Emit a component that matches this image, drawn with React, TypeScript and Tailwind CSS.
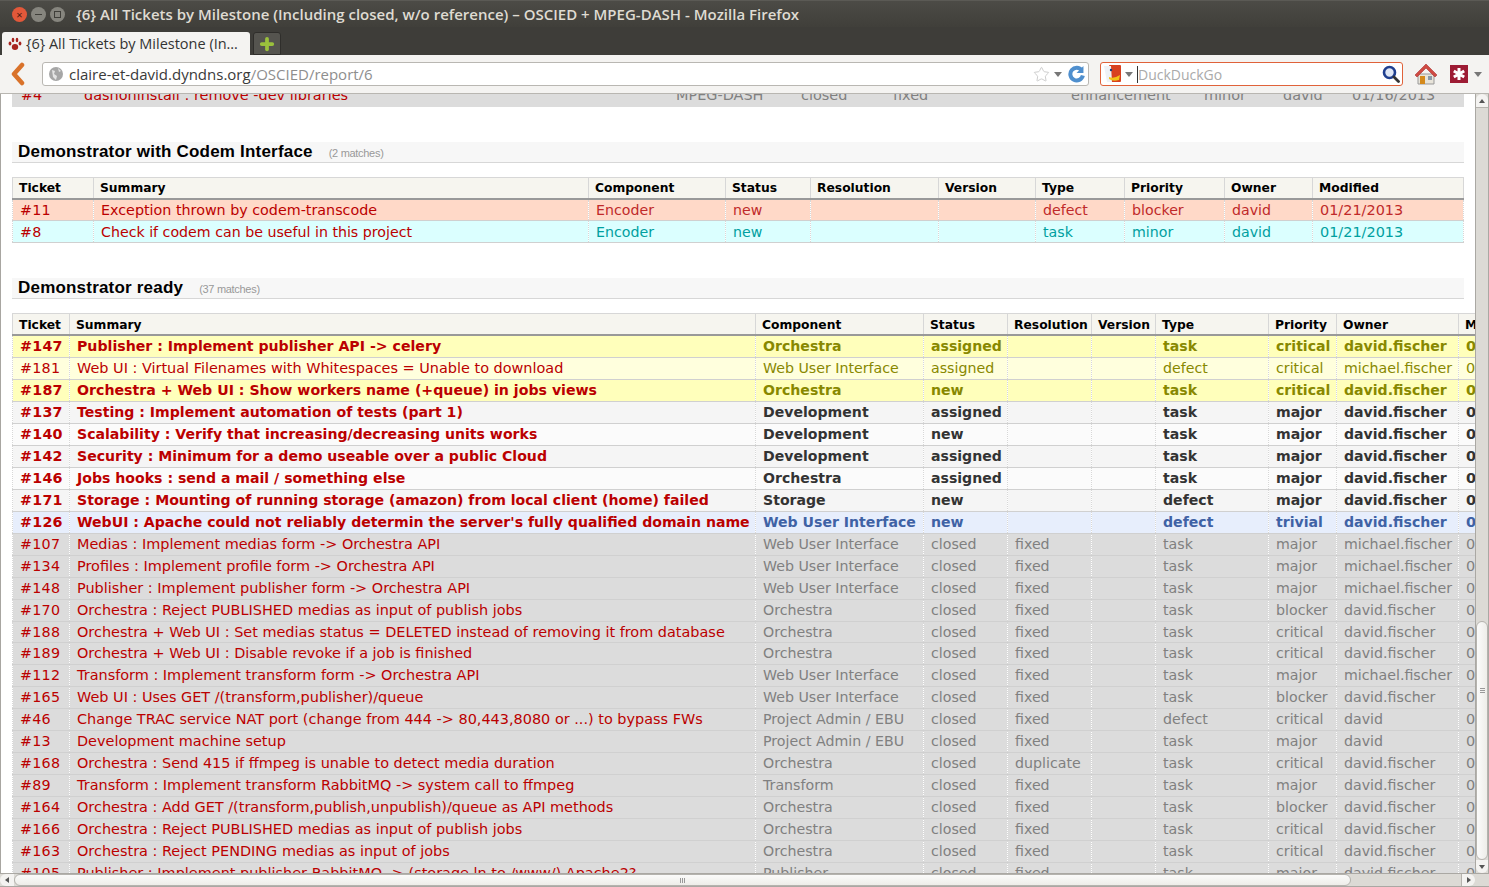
import { Plus, Star } from 'lucide-react';

const TABLE_FONT = "font-['DejaVu_Sans',sans-serif]";

type Row = {
  id: string;
  summary: string;
  component: string;
  status: string;
  resolution?: string;
  type: string;
  priority: string;
  owner: string;
  tone: keyof typeof tones;
  date?: string;
};

const tones = {
  yellowBold: { bg: 'bg-[#ffffbb]', text: 'text-[#888800]', bold: true, summary: 'text-[14.15px]' },
  yellow: { bg: 'bg-[#ffffdd]', text: 'text-[#888800]', bold: false, summary: 'text-[14.45px]' },
  whiteBold: { bg: 'bg-[#f5f5f5]', text: 'text-[#333333]', bold: true, summary: 'text-[14.1px]' },
  whiteAlt: { bg: 'bg-[#fbfbfb]', text: 'text-[#333333]', bold: true, summary: 'text-[14.1px]' },
  blueBold: { bg: 'bg-[#e7eefc]', text: 'text-[#3f62a5]', bold: true, summary: 'text-[14.1px]' },
  closed: { bg: 'bg-[#dcdcdc]', text: 'text-[#808080]', bold: false, summary: 'text-[14.45px]' },
  red: { bg: 'bg-[#ffd9c8]', text: 'text-[#c02a2a]', bold: false, summary: 'text-[14.3px]' },
  cyan: { bg: 'bg-[#dbffff]', text: 'text-[#00a0a0]', bold: false, summary: 'text-[14.2px]' }
};

const codemRows: Row[] = [
  { id: '#11', summary: 'Exception thrown by codem-transcode', component: 'Encoder', status: 'new', type: 'defect', priority: 'blocker', owner: 'david', tone: 'red', date: '01/21/2013' },
  { id: '#8', summary: 'Check if codem can be useful in this project', component: 'Encoder', status: 'new', type: 'task', priority: 'minor', owner: 'david', tone: 'cyan', date: '01/21/2013' }
];

const readyRows: Row[] = [
  { id: '#147', summary: 'Publisher : Implement publisher API -> celery', component: 'Orchestra', status: 'assigned', type: 'task', priority: 'critical', owner: 'david.fischer', tone: 'yellowBold' },
  { id: '#181', summary: 'Web UI : Virtual Filenames with Whitespaces = Unable to download', component: 'Web User Interface', status: 'assigned', type: 'defect', priority: 'critical', owner: 'michael.fischer', tone: 'yellow' },
  { id: '#187', summary: 'Orchestra + Web UI : Show workers name (+queue) in jobs views', component: 'Orchestra', status: 'new', type: 'task', priority: 'critical', owner: 'david.fischer', tone: 'yellowBold' },
  { id: '#137', summary: 'Testing : Implement automation of tests (part 1)', component: 'Development', status: 'assigned', type: 'task', priority: 'major', owner: 'david.fischer', tone: 'whiteBold' },
  { id: '#140', summary: 'Scalability : Verify that increasing/decreasing units works', component: 'Development', status: 'new', type: 'task', priority: 'major', owner: 'david.fischer', tone: 'whiteAlt' },
  { id: '#142', summary: 'Security : Minimum for a demo useable over a public Cloud', component: 'Development', status: 'assigned', type: 'task', priority: 'major', owner: 'david.fischer', tone: 'whiteBold' },
  { id: '#146', summary: 'Jobs hooks : send a mail / something else', component: 'Orchestra', status: 'assigned', type: 'task', priority: 'major', owner: 'david.fischer', tone: 'whiteAlt' },
  { id: '#171', summary: 'Storage : Mounting of running storage (amazon) from local client (home) failed', component: 'Storage', status: 'new', type: 'defect', priority: 'major', owner: 'david.fischer', tone: 'whiteBold' },
  { id: '#126', summary: "WebUI : Apache could not reliably determin the server's fully qualified domain name", component: 'Web User Interface', status: 'new', type: 'defect', priority: 'trivial', owner: 'david.fischer', tone: 'blueBold' },
  { id: '#107', summary: 'Medias : Implement medias form -> Orchestra API', component: 'Web User Interface', status: 'closed', resolution: 'fixed', type: 'task', priority: 'major', owner: 'michael.fischer', tone: 'closed' },
  { id: '#134', summary: 'Profiles : Implement profile form -> Orchestra API', component: 'Web User Interface', status: 'closed', resolution: 'fixed', type: 'task', priority: 'major', owner: 'michael.fischer', tone: 'closed' },
  { id: '#148', summary: 'Publisher : Implement publisher form -> Orchestra API', component: 'Web User Interface', status: 'closed', resolution: 'fixed', type: 'task', priority: 'major', owner: 'michael.fischer', tone: 'closed' },
  { id: '#170', summary: 'Orchestra : Reject PUBLISHED medias as input of publish jobs', component: 'Orchestra', status: 'closed', resolution: 'fixed', type: 'task', priority: 'blocker', owner: 'david.fischer', tone: 'closed' },
  { id: '#188', summary: 'Orchestra + Web UI : Set medias status = DELETED instead of removing it from database', component: 'Orchestra', status: 'closed', resolution: 'fixed', type: 'task', priority: 'critical', owner: 'david.fischer', tone: 'closed' },
  { id: '#189', summary: 'Orchestra + Web UI : Disable revoke if a job is finished', component: 'Orchestra', status: 'closed', resolution: 'fixed', type: 'task', priority: 'critical', owner: 'david.fischer', tone: 'closed' },
  { id: '#112', summary: 'Transform : Implement transform form -> Orchestra API', component: 'Web User Interface', status: 'closed', resolution: 'fixed', type: 'task', priority: 'major', owner: 'michael.fischer', tone: 'closed' },
  { id: '#165', summary: 'Web UI : Uses GET /(transform,publisher)/queue', component: 'Web User Interface', status: 'closed', resolution: 'fixed', type: 'task', priority: 'blocker', owner: 'david.fischer', tone: 'closed' },
  { id: '#46', summary: 'Change TRAC service NAT port (change from 444 -> 80,443,8080 or ...) to bypass FWs', component: 'Project Admin / EBU', status: 'closed', resolution: 'fixed', type: 'defect', priority: 'critical', owner: 'david', tone: 'closed' },
  { id: '#13', summary: 'Development machine setup', component: 'Project Admin / EBU', status: 'closed', resolution: 'fixed', type: 'task', priority: 'major', owner: 'david', tone: 'closed' },
  { id: '#168', summary: 'Orchestra : Send 415 if ffmpeg is unable to detect media duration', component: 'Orchestra', status: 'closed', resolution: 'duplicate', type: 'task', priority: 'critical', owner: 'david.fischer', tone: 'closed' },
  { id: '#89', summary: 'Transform : Implement transform RabbitMQ -> system call to ffmpeg', component: 'Transform', status: 'closed', resolution: 'fixed', type: 'task', priority: 'major', owner: 'david.fischer', tone: 'closed' },
  { id: '#164', summary: 'Orchestra : Add GET /(transform,publish,unpublish)/queue as API methods', component: 'Orchestra', status: 'closed', resolution: 'fixed', type: 'task', priority: 'blocker', owner: 'david.fischer', tone: 'closed' },
  { id: '#166', summary: 'Orchestra : Reject PUBLISHED medias as input of publish jobs', component: 'Orchestra', status: 'closed', resolution: 'fixed', type: 'task', priority: 'critical', owner: 'david.fischer', tone: 'closed' },
  { id: '#163', summary: 'Orchestra : Reject PENDING medias as input of jobs', component: 'Orchestra', status: 'closed', resolution: 'fixed', type: 'task', priority: 'critical', owner: 'david.fischer', tone: 'closed' },
  { id: '#105', summary: 'Publisher : Implement publisher RabbitMQ -> (storage ln to /www/) Apache2?', component: 'Publisher', status: 'closed', resolution: 'fixed', type: 'task', priority: 'major', owner: 'david.fischer', tone: 'closed' }
];

const codemCols = [81, 495, 137, 85, 128, 97, 89, 100, 88, 151];
const readyCols = [57, 686, 168, 84, 84, 64, 113, 68, 122, 60];
const headers = ['Ticket', 'Summary', 'Component', 'Status', 'Resolution', 'Version', 'Type', 'Priority', 'Owner', 'Modified'];

function Browser() {
  return (
    <div className="shrink-0 font-['Open_Sans',sans-serif]">
      <div className="flex h-[27px] items-center gap-[4px] border-t border-[#5b5a55] bg-gradient-to-b from-[#4c4b46] to-[#403f3a] pl-[12px]">
        <span className="flex h-[15px] w-[15px] items-center justify-center rounded-full bg-[#e2583a] text-[11px] leading-none text-[#4a1a10]">×</span>
        <span className="flex h-[15px] w-[15px] items-center justify-center rounded-full bg-[#86857e]">
          <span className="h-px w-[7px] bg-[#3f3e39]" />
        </span>
        <span className="flex h-[15px] w-[15px] items-center justify-center rounded-full bg-[#86857e]">
          <span className="h-[7px] w-[7px] border border-[#3f3e39]" />
        </span>
        <span className="ml-[7px] text-[15px] font-semibold text-[#dfdbd2]">
          {'{6} All Tickets by Milestone (Including closed, w/o reference) – OSCIED + MPEG-DASH - Mozilla Firefox'}
        </span>
      </div>
      <div className="flex h-[28px] items-end gap-[3px] bg-[#3e3d39] pl-[2px]">
        <div className="flex h-[23px] w-[248px] items-center gap-[4px] rounded-t-[3px] bg-[#f4f3f1] pl-[6px] text-[14.5px] text-[#333]">
          <PawIcon />
          <span>{'{6} All Tickets by Milestone (In…'}</span>
        </div>
        <div className="flex h-[23px] w-[28px] items-center justify-center rounded-t-[3px] border border-[#2f2e2b] bg-[#55544f]">
          <Plus size={18} strokeWidth={5} className="text-[#9bc13c]" />
        </div>
      </div>
      <div className="flex h-[39px] items-center border-b border-[#b8b6b1] bg-[#f4f3f1] pl-[10px] pr-[6px]">
        <svg width="16" height="24" viewBox="0 0 16 24">
          <path d="M12 3 4 12l8 9" fill="none" stroke="#d9722a" strokeWidth="4.5" strokeLinecap="round" strokeLinejoin="round" />
        </svg>
        <div className="ml-[16px] flex h-[24px] w-[1047px] items-center rounded-[3px] border border-[#b9b7b2] bg-white pl-[6px] pr-[3px] text-[15px]">
          <svg width="14" height="14" viewBox="0 0 14 14">
            <circle cx="7" cy="7" r="7" fill="#a6a6a6" />
            <path d="M3 3l3 1-1 3 3 2-1 4-3-3zM9 1l3 3-2 1z" fill="#e4e4e4" />
          </svg>
          <span className="ml-[6px] text-[#3a3a3a]">claire-et-david.dyndns.org</span>
          <span className="text-[#8e8e8e]">/OSCIED/report/6</span>
          <span className="ml-auto flex items-center gap-[4px]">
            <Star size={17} strokeWidth={1.2} className="text-[#c4c4c4]" />
            <span className="h-0 w-0 border-x-[4px] border-t-[5px] border-x-transparent border-t-[#777]" />
            <svg width="18" height="18" viewBox="0 0 17 17" className="ml-[1px]">
              <path d="M14 5A6 6 0 1 0 15 10" fill="none" stroke="#4f8fce" strokeWidth="3.8" />
              <path d="M15.5 1v6.5H9z" fill="#4f8fce" />
            </svg>
          </span>
        </div>
        <div className="ml-[11px] flex h-[24px] w-[303px] items-center rounded-[3px] border border-[#e0623a] bg-white pl-[3px] pr-[2px] text-[14px]">
          <DuckIcon />
          <span className="ml-[3px] h-0 w-0 border-x-[4px] border-t-[5px] border-x-transparent border-t-[#777]" />
          <span className="ml-[4px] h-[17px] w-px bg-[#333]" />
          <span className="text-[#aaa]">DuckDuckGo</span>
          <svg width="18" height="18" viewBox="0 0 18 18" className="ml-auto">
            <circle cx="7.5" cy="7.5" r="5.5" fill="#dfe7f5" stroke="#1f3f8f" strokeWidth="2.6" />
            <path d="M12 12l4.5 4.5" stroke="#333" strokeWidth="2.8" strokeLinecap="round" />
          </svg>
        </div>
        <svg width="24" height="24" viewBox="0 0 24 24" className="ml-[11px]">
          <path d="M4 12v10h16V12z" fill="#e8e4da" stroke="#999" />
          <path d="M1 13 12 2l11 11-2 2-9-9-9 9z" fill="#cf4a42" stroke="#a33" strokeWidth=".6" />
          <rect x="6" y="14" width="5" height="8" fill="#d58a1c" />
          <rect x="14" y="14" width="4" height="4" fill="#8a9aa8" />
        </svg>
        <div className="ml-[12px] flex items-center gap-[6px]">
          <div className="h-[18px] w-[18px] bg-[#9d1b34]">
            <svg width="18" height="18" viewBox="0 0 18 18">
              <path d="M9 3v12M3.8 6l10.4 6M14.2 6 3.8 12" stroke="#fff" strokeWidth="3" />
            </svg>
          </div>
          <span className="h-0 w-0 border-x-[4px] border-t-[5px] border-x-transparent border-t-[#777]" />
        </div>
      </div>
    </div>
  );
}

function PawIcon() {
  return (
    <svg width="14" height="14" viewBox="0 0 14 14" className="shrink-0">
      <g fill="#a8241f">
        <ellipse cx="7" cy="10" rx="3.2" ry="3" />
        <ellipse cx="2" cy="6.5" rx="1.4" ry="2" />
        <ellipse cx="5" cy="3" rx="1.3" ry="2.2" />
        <ellipse cx="9" cy="3" rx="1.3" ry="2.2" />
        <ellipse cx="12" cy="6.5" rx="1.4" ry="2" />
      </g>
    </svg>
  );
}

function DuckIcon() {
  return (
    <svg width="18" height="20" viewBox="0 0 18 20" className="shrink-0">
      <rect x="5" y="1" width="12" height="17" rx="1" fill="#d8411f" />
      <path d="M0 2h7l1 16H3z" fill="#eef2f6" />
      <circle cx="7" cy="6" r="1.2" fill="#1c3f7a" />
      <path d="M5 13q5 2 11-2l-1 5q-6 2-10-1z" fill="#f2c318" />
    </svg>
  );
}

function SectionHeading({ title, count }: { title: string; count: string }) {
  return (
    <h2 className="ml-[11px] flex h-[21px] w-[1452px] items-center border-b border-[#d7d7d7] bg-[#f7f7f7] pl-[6px] font-['Liberation_Sans',sans-serif]">
      <span className="text-[17px] font-bold tracking-[0.2px] text-black">{title}</span>
      <span className="ml-[16px] mt-[3px] text-[11px] tracking-[-0.3px] text-[#999]">{count}</span>
    </h2>
  );
}

function TicketTable({ cols, rows, tightHeader }: { cols: number[]; rows: Row[]; tightHeader?: boolean }) {
  return (
    <table className={`ml-[11px] table-fixed border-collapse ${TABLE_FONT}`} style={{ width: cols.reduce((a, b) => a + b, 0) }}>
      <colgroup>
        {cols.map((w, i) => (
          <col key={i} style={{ width: w }} />
        ))}
      </colgroup>
      <thead>
        <tr className="h-[21px] bg-[#f6f5ef]">
          {headers.map((name) => (
            <th
              key={name}
              className={`overflow-hidden whitespace-nowrap border border-b-2 border-[#d7d7d7] border-b-[#999] px-[6px] pb-0 text-left text-[12.3px] font-bold leading-[18px] text-black ${tightHeader ? 'pt-[2px]' : 'pt-0'}`}
            >
              {name}
            </th>
          ))}
        </tr>
      </thead>
      <tbody>
        {rows.map((row) => (
          <TicketRow key={row.id} row={row} />
        ))}
      </tbody>
    </table>
  );
}

function TicketRow({ row }: { row: Row }) {
  const tone = tones[row.tone];
  const weight = tone.bold ? 'font-bold' : 'font-normal';
  const size = tone.bold ? 'text-[14.1px]' : 'text-[14.2px]';
  const cell = `overflow-hidden whitespace-nowrap border-x border-dotted border-x-[#d7d7d7] pl-[7px] pr-[4px] py-0 leading-[20px] ${weight}`;
  // one row in the reference renders a pixel shorter than the others
  const height = row.id === '#188' ? 'h-[21px]' : 'h-[22px]';
  const data = `${cell} ${size} ${tone.text}`;
  return (
    <tr className={`${height} border-b border-[#d0d0d0] ${tone.bg}`}>
      <td className={`${cell} text-[14.3px] tracking-[0.25px] text-[#bb0000]`}>{row.id}</td>
      <td className={`${cell} ${tone.summary} text-[#bb0000]`}>{row.summary}</td>
      <td className={data}>{row.component}</td>
      <td className={data}>{row.status}</td>
      <td className={data}>{row.resolution}</td>
      <td className={cell} />
      <td className={data}>{row.type}</td>
      <td className={data}>{row.priority}</td>
      <td className={data}>{row.owner}</td>
      <td className={`${cell} text-[14.45px] ${tone.text}`}>{row.date ?? '01/21/2013'}</td>
    </tr>
  );
}

function VerticalScrollbar() {
  return (
    <div className="flex w-[14px] shrink-0 flex-col items-center border-x border-[#aaa8a3] bg-[#dcdad5]">
      <div className="flex h-[14px] w-full shrink-0 items-center justify-center rounded-t-[6px] border-b border-[#b5b3ae] bg-[#f4f3f1]">
        <span className="h-0 w-0 border-x-[3px] border-b-[4px] border-x-transparent border-b-[#555]" />
      </div>
      <div className="flex-1" />
      <div className="flex h-[239px] w-full shrink-0 flex-col items-center justify-center gap-[1px] rounded-[6px] border border-[#b5b3ae] bg-gradient-to-r from-[#fbfbfa] to-[#eeede9] pb-[100px]">
        <span className="h-px w-[5px] bg-[#999]" />
        <span className="h-px w-[5px] bg-[#999]" />
        <span className="h-px w-[5px] bg-[#999]" />
      </div>
      <div className="flex h-[13px] w-full shrink-0 items-center justify-center rounded-b-[6px] bg-[#f4f3f1]">
        <span className="h-0 w-0 border-x-[3px] border-t-[4px] border-x-transparent border-t-[#555]" />
      </div>
    </div>
  );
}

function HorizontalScrollbar() {
  return (
    <div className="flex h-[14px] shrink-0 items-center border-b border-t border-[#aaa8a3] bg-[#dcdad5] pr-[14px]">
      <div className="flex h-[12px] w-[14px] items-center justify-center rounded-l-[6px] bg-[#f4f3f1]">
        <span className="h-0 w-0 border-y-[3px] border-r-[4px] border-y-transparent border-r-[#555]" />
      </div>
      <div className="flex h-[12px] w-[1337px] items-center justify-center gap-[1px] rounded-[6px] border border-[#b5b3ae] bg-gradient-to-b from-[#fbfbfa] to-[#eeede9]">
        <span className="h-[5px] w-px bg-[#999]" />
        <span className="h-[5px] w-px bg-[#999]" />
        <span className="h-[5px] w-px bg-[#999]" />
      </div>
      <div className="flex-1" />
      <div className="flex h-[12px] w-[14px] items-center justify-center rounded-r-[6px] border-l border-[#b5b3ae] bg-[#f4f3f1]">
        <span className="h-0 w-0 border-y-[3px] border-l-[4px] border-y-transparent border-l-[#555]" />
      </div>
    </div>
  );
}

export default function App() {
  return (
    <div className="flex h-[887px] w-[1489px] flex-col overflow-hidden bg-white">
      <Browser />
      <div className="flex min-h-0 flex-1 overflow-hidden border-l border-[#a8a6a1]">
        <main className="min-w-0 flex-1 overflow-hidden bg-white">
          <div className="ml-[11px] mt-[-9px] flex h-[22px] w-[1452px] items-center bg-[#dcdcdc] font-['DejaVu_Sans',sans-serif] text-[14.45px]">
            <span className="w-[72px] pl-[9px] text-[#bb0000]">#4</span>
            <span className="w-[592px] text-[#bb0000]">dashoninstall : remove -dev libraries</span>
            <span className="w-[125px] text-[#808080]">MPEG-DASH</span>
            <span className="w-[92px] text-[#808080]">closed</span>
            <span className="w-[178px] text-[#808080]">fixed</span>
            <span className="w-[133px] text-[#808080]">enhancement</span>
            <span className="w-[79px] text-[#808080]">minor</span>
            <span className="w-[69px] text-[#808080]">david</span>
            <span className="text-[#808080]">01/16/2013</span>
          </div>
          <div className="pt-[35px]">
            <SectionHeading title="Demonstrator with Codem Interface" count="(2 matches)" />
          </div>
          <div className="pt-[14px]">
            <TicketTable cols={codemCols} rows={codemRows} />
          </div>
          <div className="pt-[35px]">
            <SectionHeading title="Demonstrator ready" count="(37 matches)" />
          </div>
          <div className="pt-[14px]">
            <TicketTable cols={readyCols} rows={readyRows} tightHeader />
          </div>
        </main>
        <VerticalScrollbar />
      </div>
      <HorizontalScrollbar />
    </div>
  );
}
